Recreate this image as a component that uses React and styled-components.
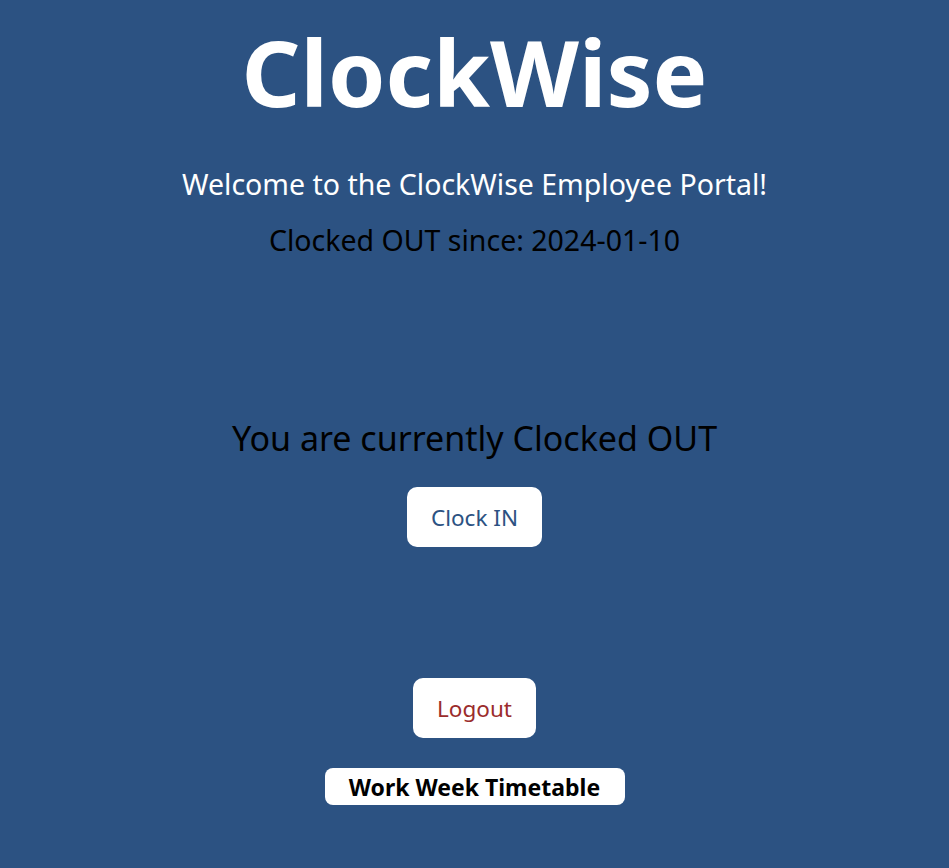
import styled, { createGlobalStyle } from "styled-components";

const GlobalStyle = createGlobalStyle`
	html, body {
		margin: 0;
		padding: 0;
		background-color: #2c5282;
		font-family: "Noto Sans", "Open Sans", sans-serif;
	}
`

const Page = styled.div`
	min-height: 868px;
	display: flex;
	flex-direction: column;
	align-items: center;
	text-align: center;
`

const Title = styled.h1`
	margin: 12px 0 0;
	font-size: 92px;
	font-weight: 700;
	line-height: 120px;
	color: #ffffff;
`

const Welcome = styled.p`
	margin: 32px 0 0;
	font-size: 28.5px;
	line-height: 40px;
	color: #ffffff;
`

const Since = styled.p`
	margin: 16px 0 0;
	font-size: 28.5px;
	line-height: 40px;
	color: #000000;
`

const Status = styled.h2`
	margin: 154px 0 0;
	font-size: 34px;
	font-weight: 400;
	line-height: 48px;
	color: #000000;
`

const Button = styled.button`
	margin-top: ${p => p.$top || 0}px;
	height: 60px;
	padding: 0 24px;
	border: none;
	border-radius: 10px;
	background: #ffffff;
	font-family: inherit;
	font-size: 22.5px;
	color: ${p => p.$color};
	cursor: pointer;
`

const Timetable = styled.button`
	margin-top: 30px;
	width: 300px;
	height: 37px;
	border: none;
	border-radius: 8px;
	background: #ffffff;
	font-family: inherit;
	font-size: 23px;
	font-weight: 700;
	color: #000000;
	cursor: pointer;
`

const App = ()=>{
	return (
		<Page>
			<GlobalStyle />
			<Title>ClockWise</Title>
			<Welcome>Welcome to the ClockWise Employee Portal!</Welcome>
			<Since>Clocked OUT since: 2024-01-10</Since>
			<Status>You are currently Clocked OUT</Status>
			<Button $top={25} $color="#2c5282">Clock IN</Button>
			<Button $top={131} $color="#9b2c2c">Logout</Button>
			<Timetable>Work Week Timetable</Timetable>
		</Page>
	)
}

export default App
